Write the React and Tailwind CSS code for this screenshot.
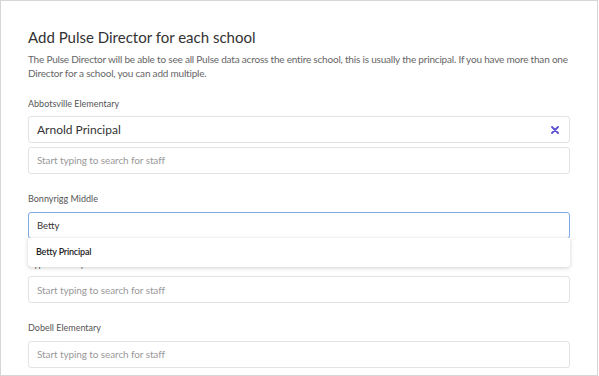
import { useState } from "react";

const schools = [
  { name: "Abbotsville Elementary", selected: ["Arnold Principal"] },
  { name: "Bonnyrigg Middle", selected: [], query: "Betty", results: ["Betty Principal"] },
  { name: "Cypress Valley", selected: [] },
  { name: "Dobell Elementary", selected: [] },
];

function StaffSearch({ query, results }) {
  const [value, setValue] = useState(query || "");
  const focused = results && results.length > 0;

  return (
    <div className="relative">
      <input
        type="text"
        value={value}
        onChange={(e) => setValue(e.target.value)}
        placeholder="Start typing to search for staff"
        className={
          focused
            ? "w-full h-[27px] rounded-[3px] border border-[#7fa8e6] bg-white px-2 text-[9.5px] text-[#333] outline-none placeholder:text-[#9a9a9a]"
            : "w-full h-[27px] rounded-[3px] border border-[#e3e3e3] bg-white px-2 text-[10px] tracking-[-0.1px] text-[#333] outline-none placeholder:text-[#9a9a9a]"
        }
      />
      {focused && (
        <div className="absolute left-0 right-0 top-[27px] z-10 bg-white rounded-b-[3px] shadow-[0_1px_4px_rgba(0,0,0,0.18)]">
          {results.map((r) => (
            <div key={r} className="h-[29px] flex items-center px-2 text-[9px] tracking-[-0.2px] font-semibold text-[#222]">
              {r}
            </div>
          ))}
        </div>
      )}
    </div>
  );
}

export default function App() {
  return (
    <div className="w-[598px] h-[376px] bg-white border border-[#d6d6d6] overflow-hidden font-['Lato',sans-serif]">
      <div className="px-[27px] pt-[26px]">
        <h2 className="text-[15px] leading-[20px] text-[#333]">
          Add Pulse Director for each school
        </h2>
        <p className="mt-[5px] text-[10px] leading-[14px] tracking-[-0.2px] text-[#666]">
          The Pulse Director will be able to see all Pulse data across the entire school, this is usually the principal. If you have more than one Director for a school, you can add multiple.
        </p>

        {/* schools */}
        <div className="mt-[16px] flex flex-col gap-[17px]">
          {schools.map((s) => (
            <div key={s.name}>
              <label className="block text-[9px] leading-[16px] text-[#555]">{s.name}</label>
              <div className="mt-[4px] flex flex-col gap-[3px]">
                {s.selected.map((p) => (
                  <div
                    key={p}
                    className="h-[27px] rounded-[3px] border border-[#e3e3e3] flex items-center justify-between px-2 text-[12px] text-[#333]"
                  >
                    <span>{p}</span>
                    <svg width="8" height="8" viewBox="0 0 8 8" className="mr-[2px]">
                      <path d="M1 1L7 7M7 1L1 7" stroke="#5b4fd1" strokeWidth="1.8" strokeLinecap="round" />
                    </svg>
                  </div>
                ))}
                <StaffSearch query={s.query} results={s.results} />
              </div>
            </div>
          ))}
        </div>
      </div>
    </div>
  );
}
